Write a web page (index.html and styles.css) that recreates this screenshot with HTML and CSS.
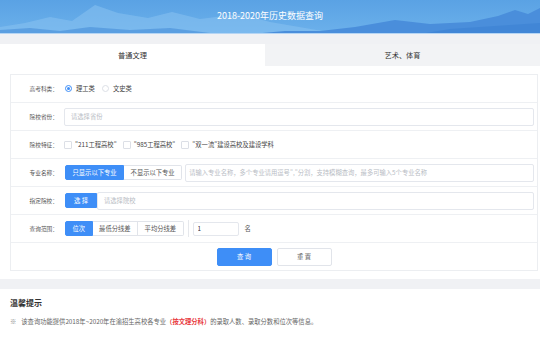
FILE: index.html
```html
<!DOCTYPE html>
<html lang="zh">
<head>
<meta charset="utf-8">
<title>2018-2020年历史数据查询</title>
<link rel="stylesheet" href="styles.css">
</head>
<body>
<header class="banner">
  <svg class="banner-art" viewBox="0 0 540 34" preserveAspectRatio="none" aria-hidden="true">
    <defs>
      <linearGradient id="sky" x1="0" y1="0" x2="0" y2="1">
        <stop offset="0" stop-color="#5aa2e4"/>
        <stop offset="1" stop-color="#6cb1eb"/>
      </linearGradient>
    </defs>
    <rect width="540" height="34" fill="url(#sky)"/>
    <polygon points="0,34 0,27 25,23 50,17 72,21 95,5 118,13 148,18 172,12 200,19 240,14 270,22 305,28 340,34" fill="#86bff0" opacity="0.6"/>
    <polygon points="0,34 0,30 30,28 60,31 90,27 130,30 170,28 210,33 240,34" fill="#4f94dc" opacity="0.7"/>
    <polygon points="250,34 285,31 320,31 355,27 395,20 430,24 470,22 498,16 515,10 528,14 540,8 540,34" fill="#4a8edb"/>
    <polygon points="420,34 450,29 480,27 510,25 540,23 540,34" fill="#3f84d4" opacity="0.8"/>
    <rect y="33" width="540" height="1" fill="#b5d5f4"/>
  </svg>
  <h1 class="banner-title">2018-2020年历史数据查询</h1>
</header>
<div class="band"></div>
<nav class="tabs">
  <div class="tab tab-active">普通文理</div>
  <div class="tab">艺术、体育</div>
</nav>
<form class="card">
  <div class="row">
    <div class="label">高考科类：</div>
    <div class="opts">
      <span class="radio radio-on"></span><span class="opt-text">理工类</span>
      <span class="radio"></span><span class="opt-text">文史类</span>
    </div>
  </div>
  <div class="row">
    <div class="label">院校省份：</div>
    <input class="field field-full" type="text" placeholder="请选择省份">
  </div>
  <div class="row">
    <div class="label">院校特征：</div>
    <div class="opts">
      <span class="check"></span><span class="opt-text">"211工程高校"</span>
      <span class="check"></span><span class="opt-text">"985工程高校"</span>
      <span class="check"></span><span class="opt-text">"双一流"建设高校及建设学科</span>
    </div>
  </div>
  <div class="row">
    <div class="label">专业名称：</div>
    <div class="btn-group">
      <span class="seg seg-on">只显示以下专业</span><span class="seg">不显示以下专业</span>
    </div>
    <input class="field field-major" type="text" placeholder="请输入专业名称，多个专业请用逗号&quot;,&quot;分割，支持模糊查询，最多可输入5个专业名称">
  </div>
  <div class="row">
    <div class="label">指定院校：</div>
    <span class="seg seg-on seg-pick">选 择</span>
    <input class="field field-school" type="text" placeholder="请选择院校">
  </div>
  <div class="row">
    <div class="label">查询范围：</div>
    <div class="btn-group">
      <span class="seg seg-on">位次</span><span class="seg">最低分线差</span><span class="seg">平均分线差</span>
    </div>
    <span class="vsep"></span>
    <input class="field field-num" type="text" value="1">
    <span class="unit">名</span>
  </div>
  <div class="row row-actions">
    <button class="btn btn-primary" type="button">查 询</button>
    <button class="btn" type="button">重 置</button>
  </div>
</form>
<div class="band band-bottom"></div>
<section class="tips">
  <h2 class="tips-title">温馨提示</h2>
  <p class="tips-text"><span class="mark">※</span>该查询功能提供2018年~2020年在渝招生高校各专业<b class="hl">（按文理分科）</b>的录取人数、录取分数和位次等信息。</p>
</section>
</body>
</html>
```

FILE: styles.css
```css
* { box-sizing: border-box; }
body {
  margin: 0;
  width: 540px;
  background: #fff;
  font-family: "Noto Sans CJK SC", "Noto Sans", sans-serif;
  color: #333;
}
.banner {
  display: grid;
  height: 34px;
}
.banner > * { grid-area: 1 / 1; }
.banner-art { display: block; width: 540px; height: 34px; }
.banner-title {
  margin: 0;
  align-self: center;
  justify-self: center;
  padding-bottom: 2px;
  font-size: 9px;
  line-height: 12px;
  font-weight: normal;
  color: #fff;
}
.band { height: 10px; background: #f0f1f4; }
.tabs { display: flex; height: 22px; background: #f2f3f5; }
.tab {
  flex: 1;
  text-align: center;
  font-size: 7.2px;
  line-height: 22px;
  color: #333;
}
.tab-active { flex: 0 0 265px; background: #fff; }
.card {
  margin: 8px 2px 0 10px;
  border: 1px solid #eceef1;
}
.row {
  display: flex;
  align-items: center;
  height: 28px;
  border-bottom: 1px solid #eef0f3;
}
.label {
  flex: 0 0 47px;
  margin-right: 7px;
  text-align: right;
  font-size: 5.7px;
  color: #555;
}
.opts { display: flex; align-items: center; }
.opt-text { font-size: 6.3px; color: #444; margin: 0 7px 0 4px; }
.radio {
  width: 7px;
  height: 7px;
  border: 1px solid #dcdfe6;
  border-radius: 50%;
  display: flex;
  align-items: center;
  justify-content: center;
}
.radio-on { border-color: #3e8ef7; }
.radio-on::after {
  content: "";
  width: 3px;
  height: 3px;
  border-radius: 50%;
  background: #3e8ef7;
}
.check {
  width: 8px;
  height: 8px;
  border: 1px solid #dcdfe6;
  border-radius: 1px;
  margin-left: -1px;
}
.opts .check + .opt-text { margin-left: 3px; margin-right: 7px; }
.field {
  height: 18px;
  border: 1px solid #e4e7ed;
  border-radius: 2px;
  padding: 0 6px;
  font-family: inherit;
  font-size: 6.3px;
  color: #555;
  outline: none;
  background: #fff;
}
.field::placeholder { color: #b8bcc4; }
.field-full { flex: 1; margin-left: -1px; margin-right: 3px; }
.field-major { flex: 1; margin-left: 3px; margin-right: 3px; padding-left: 3px; }
.field-school { flex: 1; margin-right: 3px; }
.field-num { width: 46px; height: 14px; padding: 0 4px; color: #333; }
.btn-group { display: flex; }
.seg {
  height: 15px;
  line-height: 13px;
  padding: 0 6.5px;
  border: 1px solid #e1e4ea;
  font-size: 6.3px;
  color: #555;
  background: #fff;
  white-space: nowrap;
}
.btn-group .seg + .seg { border-left: 0; }
.btn-group .seg:first-child { border-radius: 2px 0 0 2px; }
.btn-group .seg:last-child { border-radius: 0 2px 2px 0; }
.seg-on { background: #3e8ef7; border-color: #3e8ef7; color: #fff; }
.seg-pick { padding: 0 8px; border-radius: 2px 0 0 2px; }
.vsep { width: 1px; height: 17px; background: #e6e8ec; margin: 0 4px 0 4px; }
.unit { font-size: 6.3px; color: #555; margin-left: 6px; }
.row-actions { border-bottom: 0; justify-content: center; gap: 5px; height: 27px; }
.btn {
  width: 55px;
  height: 18px;
  border: 1px solid #e1e4ea;
  border-radius: 2px;
  background: #fff;
  font-family: inherit;
  font-size: 6.3px;
  color: #666;
  padding: 0;
}
.btn-primary { background: #3e8ef7; border-color: #3e8ef7; color: #fff; }
.band-bottom { margin-top: 8px; }
.tips { padding: 0 10px; }
.tips-title {
  margin: 9px 0 0;
  font-size: 8px;
  line-height: 10px;
  font-weight: bold;
  color: #333;
}
.tips-text {
  margin: 9px 0 0;
  font-size: 6.3px;
  line-height: 9px;
  color: #666;
}
.mark { margin-right: 5px; color: #888; }
.hl { color: #e8383d; font-weight: bold; }
```
